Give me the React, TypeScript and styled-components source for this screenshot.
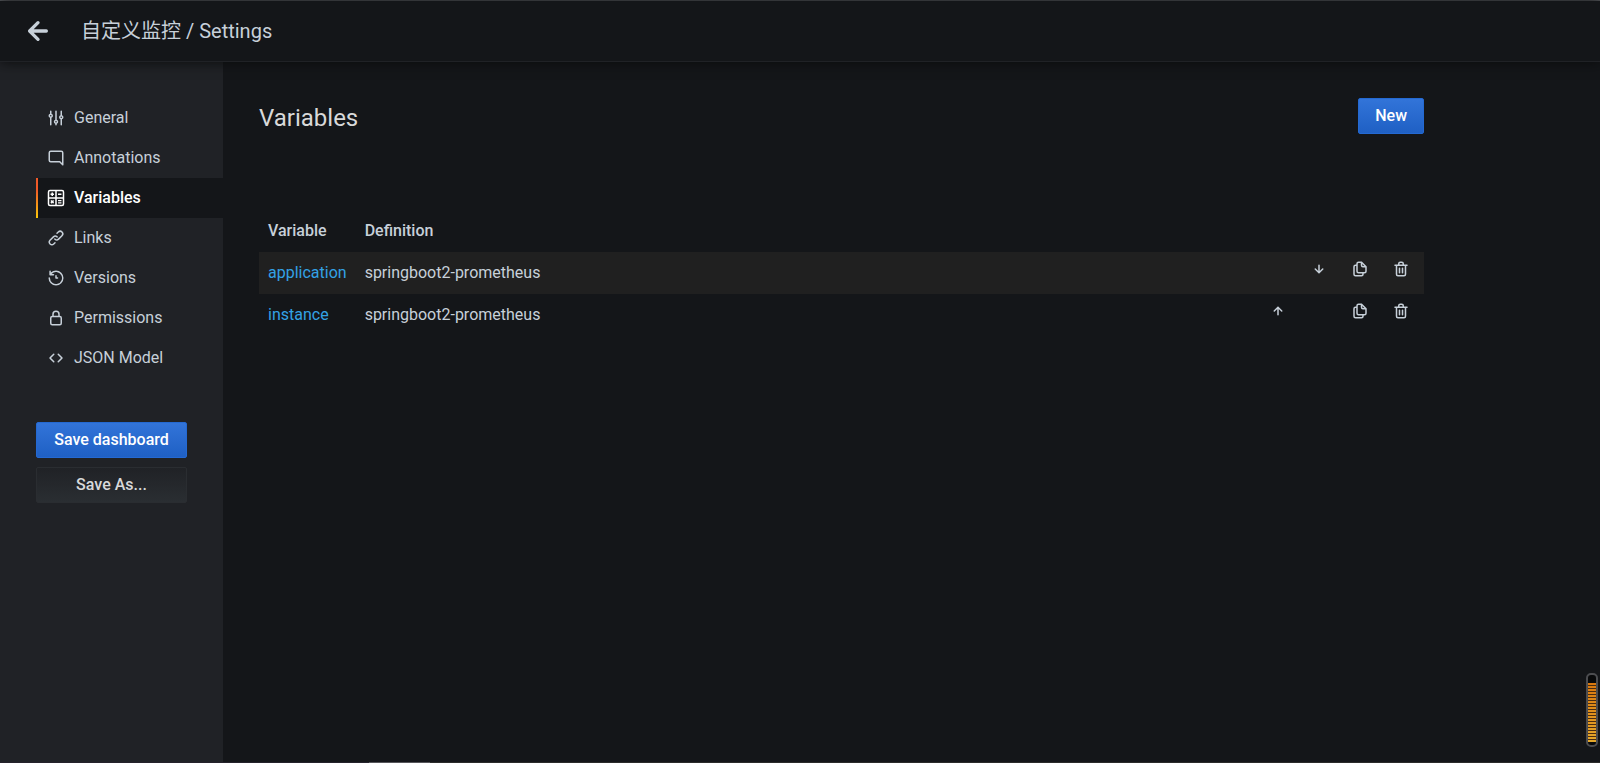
import React from 'react';
import styled, { createGlobalStyle } from 'styled-components';

const color = {
  page: '#141619',
  panel: '#202226',
  stripe: '#202020',
  text: '#c7d0d9',
  heading: '#d8d9da',
  link: '#33a2e5',
  active: '#ffffff',
};

const GlobalStyle = createGlobalStyle`
  *, *::before, *::after { box-sizing: border-box; }
  body {
    margin: 0;
    background: ${color.page};
    color: ${color.text};
    font-family: Roboto, "Noto Sans CJK SC", sans-serif;
    font-size: 16px;
    line-height: 24px;
  }
`;

const icons = {
  back: 'M17,11H9.41l3.3-3.29a1,1,0,1,0-1.42-1.42l-5,5a1,1,0,0,0-.21.33,1,1,0,0,0,0,.76,1,1,0,0,0,.21.33l5,5a1,1,0,0,0,1.42,0,1,1,0,0,0,0-1.42L9.41,13H17a1,1,0,0,0,0-2Z',
  sliders:
    'M20,8.18V3a1,1,0,0,0-2,0V8.18a3,3,0,0,0,0,5.64V21a1,1,0,0,0,2,0V13.82a3,3,0,0,0,0-5.64ZM19,12a1,1,0,1,1,1-1A1,1,0,0,1,19,12Zm-6,2.18V3a1,1,0,0,0-2,0V14.18a3,3,0,0,0,0,5.64V21a1,1,0,0,0,2,0V19.82a3,3,0,0,0,0-5.64ZM12,18a1,1,0,1,1,1-1A1,1,0,0,1,12,18ZM6,6.18V3A1,1,0,0,0,4,3V6.18a3,3,0,0,0,0,5.64V21a1,1,0,0,0,2,0V11.82A3,3,0,0,0,6,6.18ZM5,10A1,1,0,1,1,6,9,1,1,0,0,1,5,10Z',
  comment:
    'M19,2H5A3,3,0,0,0,2,5V15a3,3,0,0,0,3,3H16.59l3.7,3.71A1,1,0,0,0,21,22a.84.84,0,0,0,.38-.08A1,1,0,0,0,22,21V5A3,3,0,0,0,19,2Zm1,16.59-2.29-2.3A1,1,0,0,0,17,16H5a1,1,0,0,1-1-1V5A1,1,0,0,1,5,4H19a1,1,0,0,1,1,1Z',
  calculator:
    'M20,1H4A3,3,0,0,0,1,4V20a3,3,0,0,0,3,3H20a3,3,0,0,0,3-3V4A3,3,0,0,0,20,1ZM11,21H4a1,1,0,0,1-1-1V13h8Zm0-10H3V4A1,1,0,0,1,4,3h7Zm10,9a1,1,0,0,1-1,1H13V13h8Zm0-9H13V3h7a1,1,0,0,1,1,1ZM6,4.7h2V6h1.3v2H8V9.300H6V8H4.700V6H6ZM14.700,6h4.600v2h-4.600ZM14.700,14.600h4.600v1.800h-4.600ZM14.700,17.600h4.600v1.800h-4.600ZM5.900,14.500 7,15.600 8.100,14.500 9.500,15.900 8.400,17 9.500,18.100 8.100,19.500 7,18.400 5.900,19.500 4.500,18.100 5.600,17 4.500,15.900Z',
  link: 'M10,17.55,8.23,19.27a2.47,2.47,0,0,1-3.5-3.5l4.54-4.55a2.46,2.46,0,0,1,3.39-.09l.12.1a1,1,0,0,0,1.4-1.43A2.75,2.75,0,0,0,14,9.59a4.46,4.46,0,0,0-6.09.22L3.31,14.36a4.48,4.48,0,0,0,6.33,6.33L11.37,19A1,1,0,0,0,10,17.55ZM20.69,3.31a4.49,4.49,0,0,0-6.33,0L12.63,5A1,1,0,0,0,14,6.45l1.73-1.72a2.47,2.47,0,0,1,3.5,3.5l-4.54,4.55a2.46,2.46,0,0,1-3.39.09l-.12-.1a1,1,0,0,0-1.4,1.43,2.75,2.75,0,0,0,.23.21,4.47,4.47,0,0,0,6.09-.22l4.55-4.55A4.49,4.49,0,0,0,20.69,3.31Z',
  history:
    'M12,2A10,10,0,0,0,5.12,4.77V3a1,1,0,0,0-2,0V7.5a1,1,0,0,0,1,1H8.62a1,1,0,0,0,0-2H6.22A8,8,0,1,1,4,12a1,1,0,0,0-2,0A10,10,0,1,0,12,2Zm0,6a1,1,0,0,0-1,1v3a1,1,0,0,0,1,1h2a1,1,0,0,0,0-2H13V9A1,1,0,0,0,12,8Z',
  lock: 'M17,9V7A5,5,0,0,0,7,7V9a3,3,0,0,0-3,3v7a3,3,0,0,0,3,3H17a3,3,0,0,0,3-3V12A3,3,0,0,0,17,9ZM9,7a3,3,0,0,1,6,0V9H9Zm9,12a1,1,0,0,1-1,1H7a1,1,0,0,1-1-1V12a1,1,0,0,1,1-1H17a1,1,0,0,1,1,1Z',
  code: 'M9.71,6.29a1,1,0,0,0-1.42,0l-5,5a1,1,0,0,0,0,1.42l5,5a1,1,0,0,0,1.42,0,1,1,0,0,0,0-1.42L5.41,12l4.3-4.29A1,1,0,0,0,9.71,6.29Zm11,5-5-5a1,1,0,0,0-1.42,1.42L18.59,12l-4.3,4.29a1,1,0,0,0,0,1.42,1,1,0,0,0,1.42,0l5-5A1,1,0,0,0,20.71,11.29Z',
  copy: 'M21,8.94a1.31,1.31,0,0,0-.06-.27l0-.09a1.07,1.07,0,0,0-.19-.28h0l-6-6h0a1.07,1.07,0,0,0-.28-.19.32.32,0,0,0-.09,0A.88.88,0,0,0,14.05,2H10A3,3,0,0,0,7,5V6H6A3,3,0,0,0,3,9V19a3,3,0,0,0,3,3h8a3,3,0,0,0,3-3V18h1a3,3,0,0,0,3-3V9S21,9,21,8.94ZM15,5.41,17.59,8H16a1,1,0,0,1-1-1ZM15,19a1,1,0,0,1-1,1H6a1,1,0,0,1-1-1V9A1,1,0,0,1,6,8H7v7a3,3,0,0,0,3,3h5Zm4-4a1,1,0,0,1-1,1H10a1,1,0,0,1-1-1V5a1,1,0,0,1,1-1h3V7a3,3,0,0,0,3,3h3Z',
  trash:
    'M10,18a1,1,0,0,0,1-1V11a1,1,0,0,0-2,0v6A1,1,0,0,0,10,18ZM20,6H16V5a3,3,0,0,0-3-3H11A3,3,0,0,0,8,5V6H4A1,1,0,0,0,4,8H5V19a3,3,0,0,0,3,3h8a3,3,0,0,0,3-3V8h1a1,1,0,0,0,0-2ZM10,5a1,1,0,0,1,1-1h2a1,1,0,0,1,1,1V6H10Zm7,14a1,1,0,0,1-1,1H8a1,1,0,0,1-1-1V8H17Zm-3-1a1,1,0,0,0,1-1V11a1,1,0,0,0-2,0v6A1,1,0,0,0,14,18Z',
  down: 'M17.71,11.29a1,1,0,0,0-1.42,0L13,14.59V7a1,1,0,0,0-2,0v7.59l-3.29-3.3a1,1,0,0,0-1.42,1.42l5,5a1,1,0,0,0,.33.21.94.94,0,0,0,.76,0,1,1,0,0,0,.33-.21l5-5A1,1,0,0,0,17.71,11.29Z',
  up: 'M17.71,11.29l-5-5a1,1,0,0,0-.33-.21,1,1,0,0,0-.76,0,1,1,0,0,0-.33.21l-5,5a1,1,0,0,0,1.42,1.42L11,9.41V17a1,1,0,0,0,2,0V9.41l3.29,3.3a1,1,0,0,0,1.42,0A1,1,0,0,0,17.71,11.29Z',
};

type IconName = keyof typeof icons;

function Icon({ name, size = 18 }: { name: IconName; size?: number }) {
  return (
    <svg width={size} height={size} viewBox="0 0 24 24" fill="currentColor" aria-hidden="true">
      <path d={icons[name]} fillRule={name === 'calculator' ? 'evenodd' : undefined} />
    </svg>
  );
}

const Page = styled.div`
  display: flex;
  flex-direction: column;
  min-height: 100vh;
  border-top: 1px solid #5a5c60;
`;

const Header = styled.header`
  position: relative;
  z-index: 1;
  display: flex;
  align-items: center;
  gap: 23px;
  height: 61px;
  padding: 0 18px;
  border-bottom: 1px solid ${color.panel};
  background: ${color.page};
  box-shadow: 0 0 12px #0a0b0c;
`;

const IconButton = styled.button`
  display: inline-flex;
  padding: 0;
  border: 0;
  background: none;
  color: inherit;
  vertical-align: top;
  cursor: pointer;
`;

const PageTitle = styled.h1`
  margin: 0;
  font-size: 20px;
  font-weight: 400;
`;

const Body = styled.div`
  display: flex;
  flex: 1;
`;

const Sidebar = styled.aside`
  flex: 0 0 223px;
  padding: 36px 0 36px 36px;
  background: ${color.panel};
`;

const NavItem = styled.a<{ $active?: boolean }>`
  display: flex;
  align-items: center;
  gap: 9px;
  height: 40px;
  padding-left: 9px;
  border-left: 2px solid transparent;
  color: ${(p) => (p.$active ? color.active : color.text)};
  font-weight: ${(p) => (p.$active ? 500 : 400)};
  text-decoration: none;
  ${(p) =>
    p.$active &&
    `background: ${color.page};
     border-image: linear-gradient(#f05a28 30%, #fbca0a 99%) 1;`}
`;

const Actions = styled.div`
  display: flex;
  flex-direction: column;
  gap: 9px;
  width: 151px;
  margin-top: 44px;
`;

const Button = styled.button<{ $secondary?: boolean }>`
  height: 36px;
  padding: 0 16px;
  border: 1px solid ${(p) => (p.$secondary ? '#2a2d31' : '#2469d2')};
  border-radius: 2px;
  background: ${(p) =>
    p.$secondary ? 'linear-gradient(#202226, #2a2e32)' : 'linear-gradient(#3274d9, #1f60c4)'};
  color: ${(p) => (p.$secondary ? color.heading : '#ffffff')};
  font: 500 16px/32px Roboto, sans-serif;
  white-space: nowrap;
  cursor: pointer;
`;

const Main = styled.main`
  flex: 1;
  min-width: 0;
  padding: 36px;
`;

const Content = styled.div`
  max-width: 1165px;
`;

const Toolbar = styled.div`
  display: flex;
  align-items: flex-start;
  justify-content: space-between;
  margin-bottom: 71px;
`;

const SectionTitle = styled.h2`
  margin: 0;
  color: ${color.heading};
  font-size: 24px;
  font-weight: 400;
  line-height: 40px;
`;

const Table = styled.table`
  width: 100%;
  border-collapse: collapse;

  th {
    height: 43px;
    padding: 0 9px;
    font-weight: 500;
    text-align: left;
    white-space: nowrap;
  }
  tbody tr:nth-child(odd) {
    background: ${color.stripe};
  }
`;

const Cell = styled.td<{ $fill?: boolean }>`
  width: ${(p) => (p.$fill ? '100%' : 'auto')};
  height: 42px;
  padding: 0 9px;
  white-space: nowrap;
`;

const IconCell = styled.td`
  padding: 8px 14px 8px 9px;
  line-height: 18px;
  vertical-align: top;
`;

const IconSlot = styled.div`
  width: 18px;
  height: 18px;
`;

const VariableLink = styled.a`
  color: ${color.link};
  text-decoration: none;
`;

const Gauge = styled.div`
  position: fixed;
  right: 2px;
  bottom: 16px;
  width: 12px;
  height: 74px;
  padding: 8px 0 3px;
  border: 2px solid #4c4d50;
  border-radius: 5px;
  background: #08090a;
`;

const GaugeLevel = styled.div`
  height: 100%;
  background:
    repeating-linear-gradient(transparent 0 2px, #4a2c10 2px 3px),
    linear-gradient(#d8780e, #e4a82c);
`;

const BottomEdge = styled.div`
  position: fixed;
  left: 0;
  right: 0;
  bottom: 0;
  height: 1px;
  background: linear-gradient(90deg, #25222b 369px, #56565a 369px 430px, #2b2b2b 430px);
`;

const navItems: { label: string; icon: IconName; active?: boolean }[] = [
  { label: 'General', icon: 'sliders' },
  { label: 'Annotations', icon: 'comment' },
  { label: 'Variables', icon: 'calculator', active: true },
  { label: 'Links', icon: 'link' },
  { label: 'Versions', icon: 'history' },
  { label: 'Permissions', icon: 'lock' },
  { label: 'JSON Model', icon: 'code' },
];

const variables = [
  { name: 'application', definition: 'springboot2-prometheus' },
  { name: 'instance', definition: 'springboot2-prometheus' },
];

function RowAction({ icon, label }: { icon: IconName; label: string }) {
  return (
    <IconButton type="button" aria-label={label}>
      <Icon name={icon} />
    </IconButton>
  );
}

export default function App() {
  return (
    <Page>
      <GlobalStyle />
      <Header>
        <IconButton type="button" aria-label="Go back">
          <Icon name="back" size={40} />
        </IconButton>
        <PageTitle>自定义监控 / Settings</PageTitle>
      </Header>
      <Body>
        <Sidebar>
          <nav aria-label="Dashboard settings">
            {navItems.map((item) => (
              <NavItem key={item.label} href="#" $active={item.active}>
                <Icon name={item.icon} />
                {item.label}
              </NavItem>
            ))}
          </nav>
          <Actions>
            <Button type="button">Save dashboard</Button>
            <Button type="button" $secondary>
              Save As...
            </Button>
          </Actions>
        </Sidebar>
        <Main>
          <Content>
            <Toolbar>
              <SectionTitle>Variables</SectionTitle>
              <Button type="button">New</Button>
            </Toolbar>
            <Table>
              <thead>
                <tr>
                  <th scope="col">Variable</th>
                  <th scope="col" colSpan={5}>
                    Definition
                  </th>
                </tr>
              </thead>
              <tbody>
                {variables.map((variable, index) => (
                  <tr key={variable.name}>
                    <Cell>
                      <VariableLink href="#">{variable.name}</VariableLink>
                    </Cell>
                    <Cell $fill>{variable.definition}</Cell>
                    <IconCell>
                      <IconSlot>
                        {index > 0 && <RowAction icon="up" label="Move variable up" />}
                      </IconSlot>
                    </IconCell>
                    <IconCell>
                      <IconSlot>
                        {index < variables.length - 1 && (
                          <RowAction icon="down" label="Move variable down" />
                        )}
                      </IconSlot>
                    </IconCell>
                    <IconCell>
                      <IconSlot>
                        <RowAction icon="copy" label="Duplicate variable" />
                      </IconSlot>
                    </IconCell>
                    <IconCell>
                      <IconSlot>
                        <RowAction icon="trash" label="Remove variable" />
                      </IconSlot>
                    </IconCell>
                  </tr>
                ))}
              </tbody>
            </Table>
          </Content>
        </Main>
      </Body>
      <Gauge>
        <GaugeLevel />
      </Gauge>
      <BottomEdge />
    </Page>
  );
}
